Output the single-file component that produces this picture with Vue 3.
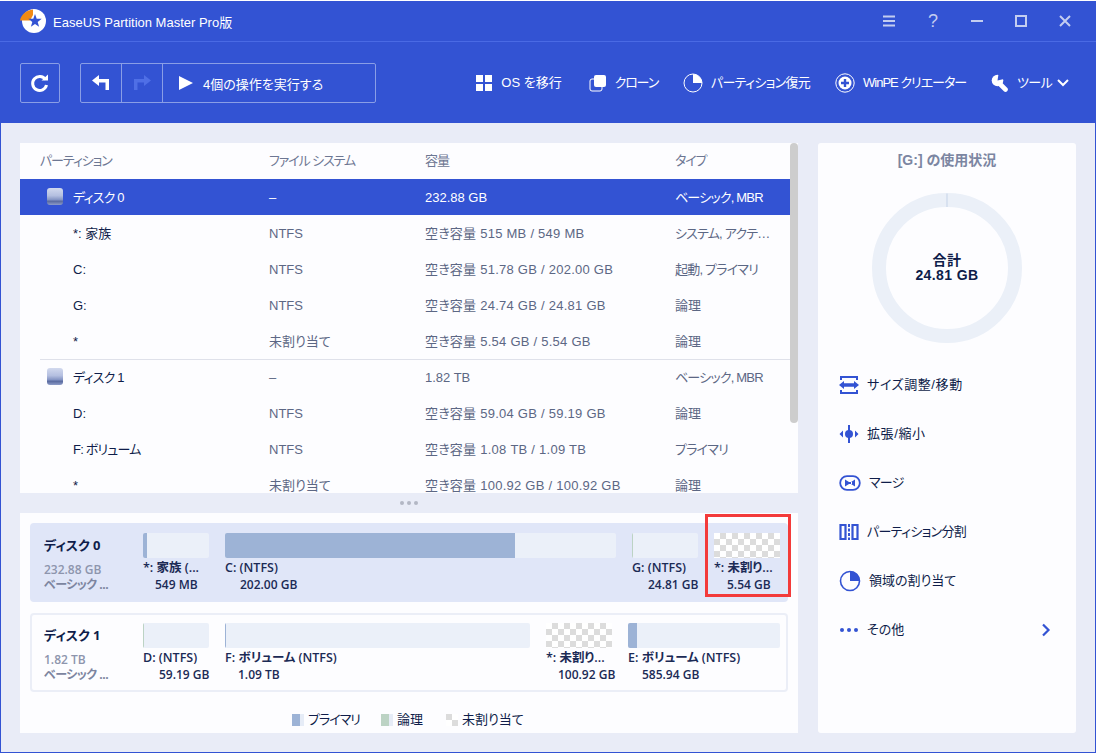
<script setup>
const rows = [
  { id: 'd0', disk: true, selected: true, name: 'ディスク 0', fs: '–', cap: '232.88 GB', type: 'ベーシック, MBR' },
  { id: 'p1', name: '*: 家族', fs: 'NTFS', cap: '空き容量 515 MB / 549 MB', type: 'システム, アクテ…' },
  { id: 'p2', name: 'C:', fs: 'NTFS', cap: '空き容量 51.78 GB / 202.00 GB', type: '起動, プライマリ' },
  { id: 'p3', name: 'G:', fs: 'NTFS', cap: '空き容量 24.74 GB / 24.81 GB', type: '論理' },
  { id: 'p4', name: '*', fs: '未割り当て', cap: '空き容量 5.54 GB / 5.54 GB', type: '論理' },
  { id: 'd1', disk: true, divided: true, name: 'ディスク 1', fs: '–', cap: '1.82 TB', type: 'ベーシック, MBR' },
  { id: 'p5', name: 'D:', fs: 'NTFS', cap: '空き容量 59.04 GB / 59.19 GB', type: '論理' },
  { id: 'p6', name: 'F: ボリューム', fs: 'NTFS', cap: '空き容量 1.08 TB / 1.09 TB', type: 'プライマリ' },
  { id: 'p7', name: '*', fs: '未割り当て', cap: '空き容量 100.92 GB / 100.92 GB', type: '論理' }
]
const disks = [
  {
    name: 'ディスク 0', size: '232.88 GB', kind: 'ベーシック ...', active: true,
    parts: [
      { label: '*: 家族 (...', size: '549 MB', w: 66, fill: 4, color: '#9db3d6', indent: 12 },
      { label: 'C: (NTFS)', size: '202.00 GB', w: 391, fill: 290, color: '#9db3d6', indent: 15 },
      { label: 'G: (NTFS)', size: '24.81 GB', w: 66, fill: 1, color: '#bcd3c4', indent: 16 },
      { label: '*: 未割り...', size: '5.54 GB', w: 66, free: true, indent: 13 }
    ]
  },
  {
    name: 'ディスク 1', size: '1.82 TB', kind: 'ベーシック ...',
    parts: [
      { label: 'D: (NTFS)', size: '59.19 GB', w: 66, fill: 1, color: '#bcd3c4', indent: 16 },
      { label: 'F: ボリューム (NTFS)', size: '1.09 TB', w: 305, fill: 1, color: '#9db3d6', indent: 13 },
      { label: '*: 未割り...', size: '100.92 GB', w: 66, free: true, indent: 12 },
      { label: 'E: ボリューム (NTFS)', size: '585.94 GB', w: 152, fill: 9, color: '#9db3d6', indent: 14 }
    ]
  }
]
const hasKana = (s) => /[\u30a0-\u30ff]/.test(s)
</script>

<template>
  <div class="window">
    <header class="head">
      <div class="titlebar">
        <svg class="logo" width="26" height="26" viewBox="0 0 26 26">
          <circle cx="14" cy="13" r="12" fill="#fff" />
          <path d="M0 12.5C1 6.5 6 2.5 13 1.5L13 7L10 12.5Z" fill="#f28a14" />
          <path d="M15 6L16.7 10.7L21.7 10.8L17.7 13.9L19.1 18.7L15 16L10.9 18.7L12.3 13.9L8.3 10.8L13.3 10.7Z" fill="#3353d3" />
        </svg>
        <span class="apptitle">EaseUS Partition Master Pro版</span>
        <div class="winctl">
          <svg width="14" height="12" viewBox="0 0 14 12"><path d="M1 1.5H13M1 6H13M1 10.5H13" stroke="#c3cdf0" stroke-width="2" /></svg>
          <span class="help">?</span>
          <svg width="14" height="12" viewBox="0 0 14 12"><path d="M1 6H13" stroke="#c3cdf0" stroke-width="2" /></svg>
          <svg width="14" height="14" viewBox="0 0 14 14"><rect x="2" y="2" width="10" height="10" fill="none" stroke="#c3cdf0" stroke-width="2" /></svg>
          <svg width="14" height="14" viewBox="0 0 14 14"><path d="M2 2L12 12M12 2L2 12" stroke="#c3cdf0" stroke-width="2" /></svg>
        </div>
      </div>
      <div class="toolbar">
        <button class="tbtn refresh">
          <svg width="20" height="20" viewBox="0 0 20 20">
            <path d="M15.5 6.5A7 7 0 1 0 16.5 12" fill="none" stroke="#fff" stroke-width="3" />
            <path d="M11.5 7.5H18V1.5Z" fill="#fff" />
          </svg>
        </button>
        <div class="group">
          <button class="cell">
            <svg width="20" height="18" viewBox="0 0 20 18"><path d="M8 1L1 6.5L8 12V8.5H14.5V16H18V5H8Z" fill="#fff" /></svg>
          </button>
          <button class="cell">
            <svg width="20" height="18" viewBox="0 0 20 18"><path d="M12 1L19 6.5L12 12V8.5H5.5V16H2V5H12Z" fill="#4f6fe6" /></svg>
          </button>
          <button class="run">
            <svg width="14" height="16" viewBox="0 0 14 16"><path d="M0 1V15L14 8Z" fill="#fff" /></svg>
            <span>4個の操作を実行する</span>
          </button>
        </div>
        <nav class="tools">
          <div class="tool t1">
            <svg width="18" height="18" viewBox="0 0 18 18"><path d="M1 1H8V8H1ZM10 1H17V8H10ZM1 10H8V17H1ZM10 10H17V17H10Z" fill="#fff" /></svg>
            <span>OS を移行</span>
          </div>
          <div class="tool t2">
            <svg width="18" height="18" viewBox="0 0 18 18">
              <rect x="1" y="5" width="12" height="12" rx="2" fill="none" stroke="#fff" stroke-width="1" />
              <rect x="5" y="1" width="12" height="12" rx="2" fill="#fff" />
            </svg>
            <span>クローン</span>
          </div>
          <div class="tool t3">
            <svg width="20" height="20" viewBox="0 0 20 20">
              <circle cx="10" cy="10" r="9" fill="none" stroke="#fff" stroke-width="1" />
              <path d="M10 1A9 9 0 0 1 19 10H10Z" fill="#fff" />
            </svg>
            <span>パーティション復元</span>
          </div>
          <div class="tool t4">
            <svg width="20" height="20" viewBox="0 0 20 20">
              <circle cx="10" cy="10" r="9.2" fill="none" stroke="#fff" stroke-width="1" />
              <circle cx="10" cy="10" r="6.5" fill="#fff" />
              <path d="M10 6V14M6 10H14" stroke="#3353d3" stroke-width="2.4" />
            </svg>
            <span>WinPE クリエーター</span>
          </div>
          <div class="tool t5">
            <svg width="18" height="18" viewBox="0 0 18 18">
              <circle cx="6.5" cy="6.5" r="5.8" fill="#fff" />
              <path d="M7 8L14.5 15.5" stroke="#fff" stroke-width="4.6" stroke-linecap="round" />
              <path d="M6.5 6.5L7.5 0H13V5Z" fill="#3353d3" />
            </svg>
            <span>ツール</span>
            <svg class="chev" width="12" height="8" viewBox="0 0 12 8"><path d="M1 1L6 6L11 1" fill="none" stroke="#fff" stroke-width="2" /></svg>
          </div>
        </nav>
      </div>
    </header>

    <main class="main">
      <div class="left">
        <section class="table">
          <div class="row th">
            <span>パーティション</span><span>ファイル システム</span><span>容量</span><span>タイプ</span>
          </div>
          <div
            v-for="r in rows"
            :key="r.id"
            class="row body"
            :class="{ selected: r.selected, divided: r.divided }"
          >
            <span class="name">
              <i v-if="r.disk" class="hdd"></i>
              <b class="nm" :class="{ tight: hasKana(r.name) }">{{ r.name }}</b>
            </span>
            <span class="muted">{{ r.fs }}</span>
            <span class="muted" :class="{ roomy: r.cap.startsWith('空き') }">{{ r.cap }}</span>
            <span class="muted ell" :class="{ tight: hasKana(r.type) }">{{ r.type }}</span>
          </div>
          <div class="scroll"></div>
        </section>

        <div class="grip"><i></i><i></i><i></i></div>

        <section class="map">
          <div class="disk-wrap">
            <div v-for="d in disks" :key="d.name" class="disk" :class="{ active: d.active }">
              <div class="dinfo">
                <div class="dname">{{ d.name }}</div>
                <div class="dsize">{{ d.size }}</div>
                <div class="dkind">{{ d.kind }}</div>
              </div>
              <div class="parts">
                <div v-for="p in d.parts" :key="p.label + p.size" class="part" :style="{ width: p.w + 'px' }">
                  <div class="bar" :class="{ free: p.free }">
                    <div v-if="!p.free" class="fill" :style="{ width: p.fill + 'px', background: p.color }"></div>
                  </div>
                  <div class="plabel">{{ p.label }}</div>
                  <div class="psize" :style="{ paddingLeft: p.indent + 'px' }">{{ p.size }}</div>
                </div>
              </div>
              <div v-if="d.active" class="mark"></div>
            </div>
          </div>
          <div class="legend">
            <span class="lg l1"><i class="sw blue"></i>プライマリ</span>
            <span class="lg l2"><i class="sw green"></i>論理</span>
            <span class="lg"><i class="sw chk"></i>未割り当て</span>
          </div>
        </section>
      </div>

      <aside class="side">
        <h2>[G:] の使用状況</h2>
        <div class="donut">
          <svg width="150" height="150" viewBox="0 0 150 150">
            <circle cx="75" cy="75" r="68" fill="none" stroke="#ebf0f8" stroke-width="14" />
            <path d="M75 0.5V14" stroke="#c5d3e8" stroke-width="1" />
          </svg>
          <div class="dtext"><div>合計</div><div>24.81 GB</div></div>
        </div>
        <ul class="actions">
          <li>
            <svg width="20" height="20" viewBox="0 0 20 20"><path d="M1 1H19V3H3V1ZM1 17H19V19H1ZM1 1H3V5H1ZM17 1H19V5H17ZM1 15H3V19H1ZM17 15H19V19H17Z" fill="#3353d3" /><path d="M0 10L5 6V8.2H15V6L20 10L15 14V11.8H5V14Z" fill="#3353d3" /></svg>
            <span class="wide">サイズ調整/移動</span>
          </li>
          <li>
            <svg width="20" height="20" viewBox="0 0 20 20"><path d="M10 1V19" stroke="#3353d3" stroke-width="2" /><circle cx="10" cy="10" r="4" fill="#3353d3" /><path d="M0.5 10L4 6.5V13.5ZM19.5 10L16 6.5V13.5Z" fill="#3353d3" /></svg>
            <span class="wide">拡張/縮小</span>
          </li>
          <li>
            <svg width="22" height="18" viewBox="0 0 22 18"><rect x="1.2" y="2.2" width="19.6" height="13.6" rx="6.8" fill="none" stroke="#3353d3" stroke-width="1.8" /><path d="M6 5.5L10 8V10L6 12.5ZM16 5.5L12 8V10L16 12.5ZM9 8H13V10H9Z" fill="#3353d3" /></svg>
            <span class="narrow">マージ</span>
          </li>
          <li>
            <svg width="20" height="18" viewBox="0 0 20 18"><path d="M1.5 2H6.5V16H1.5ZM13.5 2H18.5V16H13.5Z" fill="none" stroke="#3353d3" stroke-width="2.2" /><path d="M10 1V17" stroke="#3353d3" stroke-width="2" stroke-dasharray="3 1.5" /></svg>
            <span class="narrow">パーティション分割</span>
          </li>
          <li>
            <svg width="22" height="22" viewBox="0 0 22 22"><circle cx="11" cy="11" r="9.5" fill="none" stroke="#3353d3" stroke-width="1.6" /><path d="M11 1A10 10 0 0 1 21 11H11Z" fill="#3353d3" /></svg>
            <span>領域の割り当て</span>
          </li>
          <li>
            <svg width="20" height="6" viewBox="0 0 20 6"><circle cx="3" cy="3" r="2" fill="#3353d3" /><circle cx="10" cy="3" r="2" fill="#3353d3" /><circle cx="17" cy="3" r="2" fill="#3353d3" /></svg>
            <span>その他</span>
            <svg class="more" width="10" height="14" viewBox="0 0 10 14"><path d="M2 1.5L7.5 7L2 12.5" fill="none" stroke="#3353d3" stroke-width="2.2" /></svg>
          </li>
        </ul>
      </aside>
    </main>
  </div>
</template>

<style>
html, body { margin: 0; background: #fff; }
</style>

<style scoped>
* { box-sizing: border-box; }
.window {
  width: 1096px; height: 753px; padding-top: 1px; display: flex; flex-direction: column; overflow: hidden;
  font-family: "Liberation Sans", "Noto Sans CJK JP", sans-serif; font-size: 13px; color: #0f1d4a;
  font-feature-settings: "palt";
}
.head { background: #3353d3; color: #fff; height: 122px; flex: none; }
.titlebar {
  height: 41px; display: flex; align-items: center; padding-left: 20px;
  border-bottom: 1px solid #4a6ae4;
}
.logo { margin-right: 7px; }
.apptitle { font-size: 13px; }
.winctl { margin-left: auto; width: 190px; height: 40px; display: grid; grid-template-columns: 45px 43px 44px 44px 14px; align-items: center; margin-right: 24px; justify-items: start; }
.help { font-size: 18px; color: #c3cdf0; line-height: 1; padding-left: 1px; }
.toolbar { display: flex; align-items: center; height: 40px; margin-top: 21px; padding-left: 20px; }
button { background: none; border: 0; padding: 0; color: inherit; font: inherit; font-feature-settings: inherit; display: flex; align-items: center; justify-content: center; }
.tbtn { width: 40px; height: 40px; border: 1px solid #8a9ee6; border-radius: 2px; }
.group { margin-left: 20px; width: 296px; height: 40px; border: 1px solid #8a9ee6; border-radius: 2px; display: flex; }
.cell { width: 41px; border-right: 1px solid #8a9ee6; }
.run { flex: 1; justify-content: flex-start; padding-left: 16px; gap: 10px; font-size: 13px; }
.tools { margin-left: auto; display: flex; align-items: center; height: 40px; padding-right: 27px; }
.tool { display: flex; align-items: center; gap: 8px; font-size: 13px; line-height: 16px; }
.t2 { margin-left: 27px; }
.t3 { margin-left: 25px; }
.t4 { margin-left: 25px; }
.t5 { margin-left: 25px; }
.t2 span { letter-spacing: -1.2px; }
.t3 span { letter-spacing: -0.7px; }
.t4 span { letter-spacing: -1px; }
.t5 span { letter-spacing: -0.7px; }
.chev { margin-left: -3px; }

.main { flex: 1; background: #e9ecf7; display: flex; gap: 20px; padding: 20px 19px 19px 19px; border: solid #3353d3; border-width: 0 1px 1px 1px; min-height: 0; }
.left { width: 778px; display: flex; flex-direction: column; }
.table { position: relative; height: 350px; background: #fdfdff; overflow: hidden; flex: none; }
.row {
  position: relative; height: 36px; width: 770px; padding-left: 20px;
  display: grid; grid-template-columns: 229px 156px 250px 1fr; align-items: center; font-size: 13px; line-height: 16px;
}
.row.body { padding-top: 1px; }
.th { color: #6d7793; letter-spacing: -1.1px; }
.selected { background: #3353d3; color: #fff; }
.divided::before { content: ""; position: absolute; left: 20px; right: 0; top: 0; height: 1px; background: #dfe1ea; }
.name { display: flex; align-items: center; padding-left: 33px; position: relative; }
.nm { font-weight: 400; }
.tight { letter-spacing: -0.8px; }
.roomy { letter-spacing: 0.25px; }
.hdd {
  position: absolute; left: 7px; top: 50%; margin-top: -10px; width: 16px; height: 17px; border-radius: 3px;
  background: linear-gradient(#d2d9ee 0%, #b4bfe0 45%, #7f8fc0 72%, #55669c 76%, #8d9cc8 100%);
}
.muted { color: #5c6784; }
.selected .muted { color: #fff; }
.ell { white-space: nowrap; }
.scroll { position: absolute; right: 0; top: 0; width: 8px; height: 280px; border-radius: 4px; background: #cdcdcd; }
.grip { height: 20px; display: flex; align-items: center; justify-content: center; gap: 3px; flex: none; }
.grip i { width: 4px; height: 4px; border-radius: 50%; background: #b3b7c4; }

.map { flex: 1; background: #fdfdff; padding: 10px 10px 0 10px; display: flex; flex-direction: column; font-family: "Open Sans", "Noto Sans CJK JP", sans-serif; }
.disk-wrap { display: flex; flex-direction: column; gap: 11px; }
.disk { position: relative; height: 79px; border-radius: 4px; border: 2px solid #ebeef7; display: flex; padding: 8px 6px 0 12px; }
.disk.active { background: #e0e6f8; border-color: #e0e6f8; }
.dinfo { width: 99px; flex: none; }
.dname { font-weight: 700; font-size: 13px; margin-top: 3px; line-height: 18px; }
.dsize { color: #8d95ad; font-size: 12px; font-weight: 600; margin-top: 8px; line-height: 15px; }
.dkind { color: #7c85a0; font-size: 12px; font-weight: 700; line-height: 15px; letter-spacing: -0.5px; }
.parts { display: flex; gap: 16px; }
.part { flex: none; }
.bar { height: 25px; background: #ebf0f9; display: flex; border-radius: 2px; overflow: hidden; }
.fill { height: 100%; }
.bar.free { background: #fff repeating-conic-gradient(#dcdcdc 0 25%, transparent 0 50%) 0 0 / 12px 12px; border-radius: 0; }
.plabel { font-size: 12.5px; line-height: 17px; margin-top: 1px; white-space: nowrap; font-weight: 600; color: #1b2a55; }
.psize { font-size: 12px; line-height: 15px; margin-top: 1px; white-space: nowrap; font-weight: 600; color: #1b2a55; }
.mark { position: absolute; left: 673px; top: -11px; width: 86px; height: 83px; border: 3px solid #f33a3a; }

.legend { flex: 1; display: flex; align-items: center; padding: 14px 0 0 262px; font-size: 13px; font-family: "Liberation Sans", "Noto Sans CJK JP", sans-serif; }
.lg { display: flex; align-items: center; gap: 4px; line-height: 16px; }
.l1 { margin-right: 21px; letter-spacing: -1px; }
.l2 { margin-right: 23px; }
.sw { width: 12px; height: 12px; display: block; }
.sw.blue { background: linear-gradient(90deg, #9db3d6 8px, #e6ecf7 8px); }
.sw.green { background: linear-gradient(90deg, #bcd3c4 8px, #e6ecf7 8px); }
.sw.chk { background: #fff repeating-conic-gradient(#dcdcdc 0 25%, transparent 0 50%) 6px 0 / 12px 12px; }

.side { width: 258px; background: #fdfdff; border-radius: 3px; padding: 8px 0 0 0; flex: none; }
h2 { margin: 0; font-size: 14px; font-weight: 700; color: #7c86a2; text-align: center; line-height: 18px; }
.donut { position: relative; width: 150px; height: 150px; margin: 24px auto 0; }
.donut svg { display: block; }
.dtext { position: absolute; inset: 0; display: flex; flex-direction: column; align-items: center; justify-content: center; font-size: 14px; font-weight: 700; line-height: 15px; letter-spacing: 0.4px; }
.actions { list-style: none; margin: 17px 0 0; padding: 0 22px 0 21px; }
.actions li { height: 49px; display: flex; align-items: center; position: relative; font-size: 13px; line-height: 16px; }
.actions li svg:first-child { margin-right: 8px; flex: none; }
.wide { letter-spacing: 0.6px; }
.narrow { letter-spacing: -0.7px; }
.more { margin-left: auto; margin-right: 3px; }
</style>
